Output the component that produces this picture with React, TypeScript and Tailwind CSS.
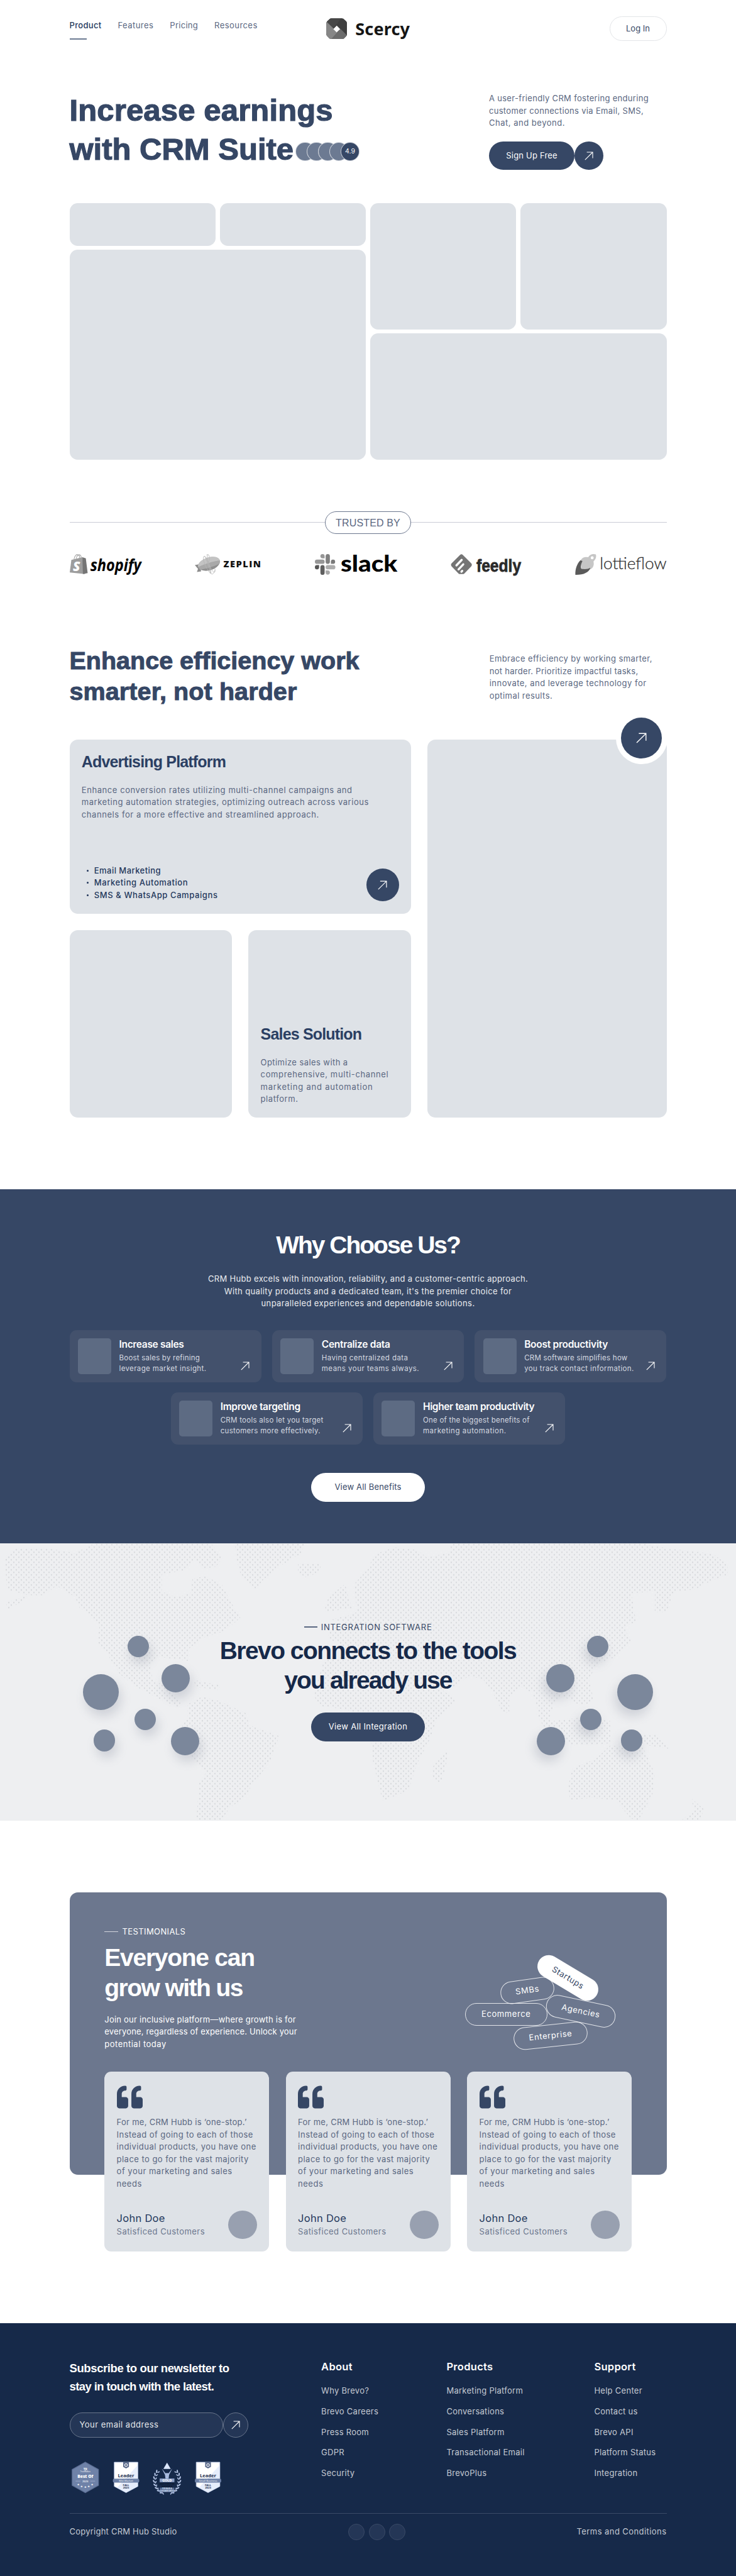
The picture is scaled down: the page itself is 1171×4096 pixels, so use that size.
import React from 'react';
import { FaQuoteLeft } from 'react-icons/fa';

type Row = [text: string, tracking: string];

function Lines({ rows, className = '' }: { rows: Row[]; className?: string }) {
  return (
    <p className={`text-[13px] leading-[19.5px] ${className}`}>
      {rows.map(([text, tracking]) => (
        <span key={text} className={`block whitespace-nowrap ${tracking}`}>
          {text}
        </span>
      ))}
    </p>
  );
}

function Arrow({ className = 'size-[14px]' }: { className?: string }) {
  return (
    <svg viewBox="0 0 14 14" className={className} fill="none" stroke="currentColor" strokeWidth="1.1">
      <path d="M0.8 13.2 13 1M3.6 1H13V10.4" />
    </svg>
  );
}

const heading = "font-['Liberation_Sans',sans-serif] font-bold";

/* ---------- Header ---------- */

function Header() {
  return (
    <header className="mx-auto grid h-[65.3px] w-[950px] grid-cols-[1fr_auto_1fr] pt-[26px]">
      <nav className="flex gap-[26px] pt-[4px] text-[13px] leading-5 text-[#5a6781]">
        <div className="text-[#24385c]">
          <a className="block font-medium tracking-[0.32px]">Product</a>
          <div className="mt-[11px] h-[2px] w-[27px] bg-[#6c7a92]" />
        </div>
        <a className="tracking-[0.45px]">Features</a>
        <a className="tracking-[0.28px]">Pricing</a>
        <a className="tracking-[0.44px]">Resources</a>
      </nav>
      <div className="flex h-[39px] items-center gap-[13px]">
        <svg viewBox="0 0 40 40" className="size-[33.5px]">
          <defs>
            <clipPath id="logo">
              <path d="M11 0H29Q33 0 36 4Q40 7 40 11V29Q40 33 36 36Q33 40 29 40H11Q7 40 4 36Q0 33 0 29V11Q0 7 4 4Q7 0 11 0Z" />
            </clipPath>
          </defs>
          <g clipPath="url(#logo)">
            <path d="M0 0H40V40H0Z" fill="#3f3f3f" />
            <path d="M0 0H28L20 12 12 20 0 7Z" fill="#474747" />
            <path d="M0 6 28 33 9 40H0Z" fill="#868686" />
            <path d="M9 40 27 20 40 33V40Z" fill="#6b6b6b" />
            <path d="M20 14 26.5 20.5 20 27 13.500 20.500Z" fill="#fff" />
          </g>
        </svg>
        <span className="font-['Noto_Sans',sans-serif] text-[27px] leading-[39px] font-bold tracking-[0.2px] text-[#151515]">
          Scercy
        </span>
      </div>
      <a className="flex h-[39.3px] w-[91px] items-center justify-center justify-self-end rounded-full border border-[#e3e5e8] pt-px text-[13px] font-normal text-[#364765]">
        Log In
      </a>
    </header>
  );
}

/* ---------- Hero ---------- */

function Hero() {
  return (
    <section className="mx-auto mt-[80px] w-[950px]">
      <div className="flex h-[177.700px] justify-between">
        <h1 className={`${heading} text-[49px] leading-[61.9px] text-[#364765]`}>
          <span className="block tracking-[0.15px] [-webkit-text-stroke:1.2px_currentColor]">Increase earnings</span>
          <span className="flex items-center whitespace-nowrap">
            <span className="[-webkit-text-stroke:1.2px_currentColor]">with CRM Suite</span>
            <span className="mt-[6px] ml-[3px] flex">
              <i className="size-[30.6px] rounded-full border border-white/70 bg-[#6c7a92]" />
              <i className="-ml-[12.700px] size-[30.6px] rounded-full border border-white/70 bg-[#6c7a92]" />
              <i className="-ml-[12.700px] size-[30.6px] rounded-full border border-white/70 bg-[#6c7a92]" />
              <i className="-ml-[12.700px] size-[30.6px] rounded-full border border-white/70 bg-[#6c7a92]" />
              <b className="-ml-[12.700px] flex size-[30.6px] items-center justify-center rounded-full border border-white/70 bg-[#364765] font-[Inter,sans-serif] text-[10.5px] leading-none font-normal text-white">
                4.9
              </b>
            </span>
          </span>
        </h1>
        <div className="w-[282.6px] pt-[2px] text-[#5a6781]">
          <Lines
            rows={[
              ['A user-friendly CRM fostering enduring', 'tracking-[0.32px]'],
              ['customer connections via Email, SMS,', 'tracking-[0.33px]'],
              ['Chat, and beyond.', 'tracking-[0.52px]'],
            ]}
          />
          <div className="mt-[19px] flex text-white">
            <a className="flex h-[45.6px] w-[136.4px] items-center justify-center rounded-full bg-[#364765] text-[13px] tracking-[0.2px]">
              Sign Up Free
            </a>
            <a className="flex size-[45.6px] items-center justify-center rounded-full bg-[#364765]">
              <Arrow />
            </a>
          </div>
        </div>
      </div>
      <div className="grid h-[408.3px] grid-cols-2 gap-[6.700px]">
        <div className="grid grid-cols-2 grid-rows-[67.8px_1fr] gap-[6.700px]">
          <div className="rounded-[12.5px] bg-[#dee2e7]" />
          <div className="rounded-[12.5px] bg-[#dee2e7]" />
          <div className="col-span-2 rounded-[12.5px] bg-[#dee2e7]" />
        </div>
        <div className="grid grid-cols-2 grid-rows-2 gap-[6.700px]">
          <div className="rounded-[12.5px] bg-[#dee2e7]" />
          <div className="rounded-[12.5px] bg-[#dee2e7]" />
          <div className="col-span-2 rounded-[12.5px] bg-[#dee2e7]" />
        </div>
      </div>
    </section>
  );
}

/* ---------- Trusted by ---------- */

function Logos() {
  return (
    <div className="mt-[31.800px] flex items-center justify-between">
      <svg viewBox="0 0 136 40" className="h-[33.5px] w-[113.8px] overflow-visible">
        <path d="M3 11 24 6 29 38 0 35Z" fill="#9d9d9d" />
        <path d="M24 6 30.500 8 34 36 25 38Z" fill="#757575" />
        <path d="M8 10C9 3 13 0 16 1.500 19 3 19 6 19 8M12 9C13 3 17 0 20 2 22 4 22 6 22 7" fill="none" stroke="#a2a2a2" strokeWidth="1.300" />
        <text x="6" y="32" fontFamily="Open Sans" fontWeight="800" fontStyle="italic" fontSize="25" fill="#fff">S</text>
        <text x="39" y="32" textLength="97" lengthAdjust="spacingAndGlyphs" fontFamily="Open Sans" fontWeight="700" fontStyle="italic" fontSize="31" fill="#000">shopify</text>
      </svg>
      <svg viewBox="0 0 126 40" className="h-[33.5px] w-[105.400px] overflow-visible">
        <path d="M0 21 9 19 12 33 4 34 6 28Z" fill="#8d8d8d" />
        <g transform="rotate(-17 27 18)">
          <ellipse cx="27" cy="18.500" rx="21.500" ry="12" fill="#a9a9a9" />
          <path d="M5.500 18.500C5.500 11 15 6.500 27 6.500S48.500 11 48.500 18.500C40 16 14 16 5.500 18.500Z" fill="#c3c3c3" />
          <path d="M9 24C18 26 36 26 45 24C38 33 16 33 9 24Z" fill="#8f8f8f" />
        </g>
        <path d="M30 37C23 30 13 10 17 5S28 20 31 37C33 40 37 36 38 31M22 2C27-2 30 6 26 16M17 5C20 0 24 18 30 37M25 1C22 6 24 14 30 26S40 36 38 27" fill="none" stroke="#b5b5b5" strokeWidth="1" />
        <text x="54.500" y="25.500" textLength="71" fontFamily="Open Sans" fontWeight="800" fontSize="17.500" fill="#111">ZEPLIN</text>
      </svg>
      <svg viewBox="0 0 157 40" className="h-[33.5px] w-[131.300px] overflow-visible">
        <g fill="#979797">
          <path d="M14.500 0a4 4 0 0 1 4 4v4h-4a4 4 0 0 1 0-8Z" />
          <rect x="0" y="10.500" width="18.500" height="8" rx="4" />
          <rect x="20.500" y="0" width="8" height="18.500" rx="4" fill="#808080" />
          <path d="M30.500 18.500v-4a4 4 0 1 1 4 4Z" fill="#7a7a7a" />
          <path d="M8 21v4a4 4 0 1 1-4-4Z" fill="#555" />
          <rect x="10.500" y="21" width="8" height="18.500" rx="4" fill="#5f5f5f" />
          <rect x="20.500" y="21" width="18.500" height="8" rx="4" fill="#adadad" />
          <path d="M20.500 31h4a4 4 0 1 1-4 4Z" fill="#a8a8a8" />
        </g>
        <text x="49" y="33.500" textLength="108" lengthAdjust="spacingAndGlyphs" fontFamily="Lato" fontWeight="900" fontSize="44" fill="#000">slack</text>
      </svg>
      <svg viewBox="0 0 134 40" className="h-[33.5px] w-[112.100px] overflow-visible">
        <path d="M18 1.500Q20.500-1 23 1.500L39.500 18Q41.500 20.500 39.500 23L26 37Q25 38 23 38H18Q16 38 15 37L1.500 23Q-.5 20.500 1.500 18Z" fill="#757575" />
        <path d="M11 21.500 21 11M15 29 24 19.500M20.500 33.500 22 32" stroke="#fff" strokeWidth="4" strokeLinecap="round" />
        <text x="49" y="33.500" textLength="85" lengthAdjust="spacingAndGlyphs" fontFamily="Liberation Sans" fontWeight="700" fontSize="34" fill="#2a2a2a" stroke="#2a2a2a" strokeWidth="0.9">feedly</text>
      </svg>
      <svg viewBox="0 0 174 40" className="h-[33.5px] w-[145.500px] overflow-visible">
        <path d="M10 12C15 5 20 5 25 6C28 0 34-1 39.500 .5C41 6 39 10 35 14C37 23 33 28 26 30L12 28Z" fill="#c6c6c6" />
        <circle cx="32.500" cy="7" r="2.800" fill="#fff" />
        <path d="M10 12 14 13C11 19 10 25 12 28C18 29 24 29 29 26C27 35 15 40 .5 39.500C0 28 4 18 10 12Z" fill="#5a5a5a" />
        <text x="47" y="28.500" textLength="127" lengthAdjust="spacingAndGlyphs" fontFamily="Lato" fontWeight="300" fontSize="31.500" fill="#2c2c2c" stroke="#2c2c2c" strokeWidth="0.3">lottieflow</text>
      </svg>
    </div>
  );
}

function Trusted() {
  return (
    <section className="mx-auto mt-[81.500px] w-[950px]">
      <div className="flex items-center">
        <div className="h-px grow bg-[#c9ccd6]" />
        <div className="flex h-[36.2px] w-[136.300px] items-center justify-center rounded-full border border-[#6c778e] pt-0.5 font-['Liberation_Sans',sans-serif] text-[16px] tracking-[0.15px] text-[#5a6781]">
          TRUSTED BY
        </div>
        <div className="h-px grow bg-[#c9ccd6]" />
      </div>
      <Logos />
    </section>
  );
}

/* ---------- Efficiency ---------- */

function Efficiency() {
  return (
    <section className="mx-auto mt-[112.100px] w-[950px]">
      <div className="flex h-[149.200px] justify-between">
        <h2 className={`${heading} text-[39.5px] leading-[49px] text-[#364765] [-webkit-text-stroke:1px_currentColor]`}>
          <span className="block">Enhance efficiency work</span>
          <span className="block tracking-[0.1px]">smarter, not harder</span>
        </h2>
        <Lines
          className="w-[281.800px] pt-3 text-[#5a6781]"
          rows={[
            ['Embrace efficiency by working smarter,', 'tracking-[0.41px]'],
            ['not harder. Prioritize impactful tasks,', 'tracking-[0.3px]'],
            ['innovate, and leverage technology for', 'tracking-[0.48px]'],
            ['optimal results.', 'tracking-[0.43px]'],
          ]}
        />
      </div>
      <div className="flex h-[601.900px] gap-[25.900px]">
        <div className="flex w-[543.600px] flex-col gap-[25.900px]">
          <article className="flex h-[277.200px] flex-col rounded-[13px] bg-[#dee2e7] px-[19.300px] pt-5 pb-[19.600px]">
            <h3 className={`${heading} text-[25px] leading-[30px] tracking-[-0.83px] text-[#2b3f63]`}>
              Advertising Platform
            </h3>
            <Lines
              className="mt-[21.300px] text-[#5a6781]"
              rows={[
                ['Enhance conversion rates utilizing multi-channel campaigns and', 'tracking-[0.57px]'],
                ['marketing automation strategies, optimizing outreach across various', 'tracking-[0.55px]'],
                ['channels for a more effective and streamlined approach.', 'tracking-[0.57px]'],
              ]}
            />
            <div className="mt-auto flex items-end justify-between">
              <ul className="text-[13px] leading-[19.5px] font-medium text-[#24385c]">
                {[
                  ['Email Marketing', 'tracking-[0.46px]'],
                  ['Marketing Automation', 'tracking-[0.59px]'],
                  ['SMS & WhatsApp Campaigns', 'tracking-[0.59px]'],
                ].map(([t, c]) => (
                  <li key={t} className={`flex items-center pl-[8px] ${c}`}>
                    <i className="mr-[8.800px] size-[3.200px] rounded-full bg-current" />
                    {t}
                  </li>
                ))}
              </ul>
              <a className="flex size-[52px] items-center justify-center rounded-full bg-[#364765] text-white">
                <Arrow className="size-[15px]" />
              </a>
            </div>
          </article>
          <div className="flex grow justify-between">
            <article className="w-[258.800px] rounded-[13px] bg-[#dee2e7]" />
            <article className="flex w-[258.800px] flex-col justify-end rounded-[13px] bg-[#dee2e7] px-[19.300px] pb-[19.800px]">
              <h3 className={`${heading} text-[25px] leading-[30px] tracking-[-0.83px] text-[#2b3f63]`}>
                Sales Solution
              </h3>
              <Lines
                className="mt-[21px] text-[#5a6781]"
                rows={[
                  ['Optimize sales with a', 'tracking-[0.42px]'],
                  ['comprehensive, multi-channel', 'tracking-[0.63px]'],
                  ['marketing and automation', 'tracking-[0.79px]'],
                  ['platform.', 'tracking-[0.56px]'],
                ]}
              />
            </article>
          </div>
        </div>
        <article className="relative grow rounded-[13px] bg-[#dee2e7]">
          <a className="absolute -top-[42.600px] -right-px flex size-[82px] items-center justify-center rounded-full bg-white">
            <span className="flex size-[65px] items-center justify-center rounded-full bg-[#364765] text-white">
              <Arrow className="size-[17px]" />
            </span>
          </a>
        </article>
      </div>
    </section>
  );
}

/* ---------- Why choose us ---------- */

const benefits: { title: Row; rows: Row[] }[] = [
  {
    title: ['Increase sales', 'tracking-[-0.33px]'],
    rows: [['Boost sales by refining', 'tracking-[0.22px]'], ['leverage market insight.', 'tracking-[0.36px]']],
  },
  {
    title: ['Centralize data', 'tracking-[-0.29px]'],
    rows: [['Having centralized data', 'tracking-[0.4px]'], ['means your teams always.', 'tracking-[0.47px]']],
  },
  {
    title: ['Boost productivity', 'tracking-[-0.26px]'],
    rows: [['CRM software simplifies how', 'tracking-[0.25px]'], ['you track contact information.', 'tracking-[0.39px]']],
  },
  {
    title: ['Improve targeting', 'tracking-[-0.32px]'],
    rows: [['CRM tools also let you target', 'tracking-[0.27px]'], ['customers more effectively.', 'tracking-[0.31px]']],
  },
  {
    title: ['Higher team productivity', 'tracking-[-0.37px]'],
    rows: [['One of the biggest benefits of', 'tracking-[0.24px]'], ['marketing automation.', 'tracking-[0.54px]']],
  },
];

function WhyUs() {
  return (
    <section className="mt-[113.900px] flex h-[562.200px] flex-col items-center bg-[#364765] pt-[63.200px] text-white">
      <h2 className={`${heading} text-[39px] leading-[50px] tracking-[-2px]`}>Why Choose Us?</h2>
      <Lines
        className="mt-[19.500px] text-center text-white/90"
        rows={[
          ['CRM Hubb excels with innovation, reliability, and a customer-centric approach.', 'tracking-[0.32px]'],
          ["With quality products and a dedicated team, it's the premier choice for", 'tracking-[0.35px]'],
          ['unparalleled experiences and dependable solutions.', 'tracking-[0.4px]'],
        ]}
      />
      <div className="mt-[32.700px] flex w-[951px] flex-wrap justify-center gap-x-[17px] gap-y-[16.400px]">
        {benefits.map(({ title, rows }) => (
          <article key={title[0]} className="flex h-[82.700px] w-[305.300px] rounded-[11px] bg-[#43516c] pt-[12.800px] pr-[18.400px] pl-[13.400px]">
            <div className="mr-[12.600px] h-[57px] w-[53px] shrink-0 rounded-[5px] bg-[#5d6b83]" />
            <div>
              <h3 className={`text-[15.500px] leading-5 font-semibold whitespace-nowrap ${title[1]}`}>{title[0]}</h3>
              <p className="mt-[2.500px] text-[11.5px] leading-[17.100px] text-[#d5d9e0]">
                {rows.map(([t, c]) => (
                  <span key={t} className={`block whitespace-nowrap ${c}`}>
                    {t}
                  </span>
                ))}
              </p>
            </div>
            <Arrow className="mt-[36.500px] ml-auto size-[14px] shrink-0" />
          </article>
        ))}
      </div>
      <a className="mt-[45px] flex h-[46.200px] w-[180.700px] items-center justify-center rounded-full bg-white text-[13px] tracking-[0.19px] text-[#364765]">
        View All Benefits
      </a>
    </section>
  );
}

/* ---------- Integration ---------- */

const land = [
  '10,110 30,60 100,60 160,85 200,35 450,35 475,110 460,160 430,170 415,120 390,180 345,200 345,290 375,320 405,300 410,220 440,210 475,260 490,340 512,430 480,500 430,540 400,600 400,660 375,650 340,640 320,680 325,760 350,790 385,880 380,910 330,850 285,790 255,730 225,610 208,560 212,470 195,420 170,380 160,320 120,260 95,310 60,310 15,280',
  '12,350 60,310 50,340 18,385',
  '500,35 650,35 640,90 600,150 560,230 545,280 515,220 505,130',
  '635,140 685,145 680,180 655,220 635,190',
  '410,760 470,790 465,815 420,800',
  '400,890 430,850 470,875 525,940 530,1000 595,1060 575,1200 540,1310 520,1390 490,1440 470,1512 418,1512 425,1300 440,1250 415,1190 390,1100 385,1020 400,960',
  '690,400 700,320 735,250 745,340 750,380',
  '700,540 700,500 740,450 700,440 740,420 760,400 755,250 780,180 800,90 840,55 890,70 910,110 960,80 960,35 1370,35 1420,60 1520,90 1550,150 1550,200 1510,240 1480,280 1435,290 1420,400 1395,400 1395,290 1345,300 1355,450 1330,480 1345,560 1310,640 1270,680 1255,760 1265,870 1240,900 1200,850 1180,880 1170,980 1150,960 1135,830 1110,800 1085,850 1085,940 1070,930 1050,830 1030,760 1000,740 965,800 930,700 850,660 760,620',
  '690,660 760,620 850,660 930,700 945,820 975,870 930,980 915,1080 890,1200 870,1350 815,1405 795,1200 790,1080 775,980 740,920 680,900 668,840',
  '920,1230 955,1120 950,1220 940,1310 920,1290',
  '1140,940 1180,980 1240,960 1300,980 1300,1100 1220,1110 1170,1050',
  '1330,1060 1400,1050 1430,1130 1380,1110',
  '1215,1400 1210,1330 1220,1230 1270,1180 1300,1110 1340,1120 1370,1120 1395,1260 1390,1370 1360,1512 1345,1500 1310,1400 1260,1390',
  '1470,1385 1500,1450 1490,1512 1450,1512 1480,1450',
];

function WorldMap() {
  return (
    <svg viewBox="0 0 1171 441" className="absolute inset-0 size-full">
      <defs>
        <pattern id="dots" width="8" height="8" patternUnits="userSpaceOnUse">
          <circle cx="2" cy="2" r="1.150" fill="#d6d8dc" />
          <circle cx="6" cy="6" r="1.150" fill="#d6d8dc" />
        </pattern>
        <clipPath id="land">
          {land.map((p) => (
            <polygon key={p} points={p} transform="translate(0 -10.450) scale(.7468 .2987)" />
          ))}
        </clipPath>
      </defs>
      <rect width="1171" height="441" fill="url(#dots)" clipPath="url(#land)" />
    </svg>
  );
}

function Nodes({ className }: { className: string }) {
  const dot = 'absolute rounded-full bg-[#7b879b] shadow-[4px_10px_16px_rgba(100,110,130,0.22)]';
  return (
    <div className={`absolute inset-y-0 w-[440px] ${className}`}>
      <i className={`${dot} top-[147.500px] left-[203px] size-[34.300px]`} />
      <i className={`${dot} top-[192.700px] left-[257.200px] size-[45px]`} />
      <i className={`${dot} top-[208px] left-[131.700px] size-[57px]`} />
      <i className={`${dot} top-[263px] left-[214px] size-[34.300px]`} />
      <i className={`${dot} top-[292px] left-[271.800px] size-[45px]`} />
      <i className={`${dot} top-[296.700px] left-[148.600px] size-[34.300px]`} />
    </div>
  );
}

function Integration() {
  return (
    <section className="relative h-[441.500px] overflow-hidden bg-[#eeeff1]">
      <WorldMap />
      <Nodes className="left-0" />
      <Nodes className="right-0 -scale-x-100" />
      <div className="relative flex flex-col items-center pt-[123.500px]">
        <div className="flex items-center gap-[5.500px] text-[13px] leading-5 tracking-[0.72px] whitespace-nowrap text-[#364765]">
          <i className="h-[1.500px] w-[21.700px] bg-[#5a6781]" />
          INTEGRATION SOFTWARE
        </div>
        <h2 className={`${heading} mt-[3.800px] text-center text-[39px] leading-[47.500px] text-[#162949]`}>
          <span className="block tracking-[-1.56px]">Brevo connects to the tools</span>
          <span className="block tracking-[-1.9px]">you already use</span>
        </h2>
        <a className="mt-[27.600px] flex h-[45.200px] w-[180.700px] items-center justify-center rounded-full bg-[#364765] text-[13px] tracking-[0.34px] text-white">
          View All Integration
        </a>
      </div>
    </section>
  );
}

/* ---------- Testimonials ---------- */

const pill = 'absolute flex h-[36px] items-center justify-center rounded-full text-[13px] tracking-[0.6px]';

function Testimonials() {
  return (
    <section className="relative mx-auto mt-[114.400px] h-[448.100px] w-[950px] rounded-[13px] bg-[#6c778e] px-[55.800px] pt-[52px] text-white">
      <div className="flex items-center gap-[6.500px] text-[13px] leading-5 tracking-[0.4px]">
        <i className="h-[1.500px] w-[21.700px] bg-white/70" />
        TESTIMONIALS
      </div>
      <h2 className={`${heading} mt-[7.600px] text-[39px] leading-[48px]`}>
        <span className="block tracking-[-1.27px]">Everyone can</span>
        <span className="block tracking-[-1.56px]">grow with us</span>
      </h2>
      <Lines
        className="mt-[16.800px]"
        rows={[
          ['Join our inclusive platform—where growth is for', 'tracking-[0.22px]'],
          ['everyone, regardless of experience. Unlock your', 'tracking-[0.16px]'],
          ['potential today', 'tracking-[0.5px]'],
        ]}
      />
      <span className={`${pill} top-[175.800px] left-[629px] w-[131.500px] border border-white/80`}>Ecommerce</span>
      <span className={`${pill} top-[137.600px] left-[685px] w-[86px] -rotate-8 border border-white/80`}>SMBs</span>
      <span className={`${pill} top-[170.600px] left-[757px] w-[112px] rotate-12 border border-white/80`}>Agencies</span>
      <span className={`${pill} top-[209.800px] left-[706.700px] w-[118px] -rotate-6 border border-white/80`}>Enterprise</span>
      <span className={`${pill} top-[117.200px] left-[739.700px] w-[107px] rotate-31 bg-white text-[#364765]`}>Startups</span>
      <div className="mt-[33.800px] flex gap-[26.500px]">
        {[0, 1, 2].map((n) => (
          <article key={n} className="flex h-[285.800px] w-[262px] shrink-0 flex-col rounded-[11px] bg-[#dee2e7] px-[19.300px] pt-[19.600px] pb-[19.700px]">
            <FaQuoteLeft className="size-[41px] shrink-0 text-[#364765]" />
            <Lines
              className="mt-[10.500px] text-[#5a6781]"
              rows={[
                ['For me, CRM Hubb is ‘one-stop.’', 'tracking-[0.27px]'],
                ['Instead of going to each of those', 'tracking-[0.43px]'],
                ['individual products, you have one', 'tracking-[0.48px]'],
                ['place to go for the vast majority', 'tracking-[0.46px]'],
                ['of your marketing and sales', 'tracking-[0.5px]'],
                ['needs', 'tracking-[0.5px]'],
              ]}
            />
            <div className="mt-auto flex items-center justify-between">
              <div>
                <div className="text-[16.500px] leading-[23px] tracking-[0.27px] text-[#24385c]">John Doe</div>
                <div className="text-[13px] leading-[19px] tracking-[0.46px] text-[#6c778e]">Satisficed Customers</div>
              </div>
              <i className="size-[45.600px] rounded-full bg-[#98a0b0]" />
            </div>
          </article>
        ))}
      </div>
    </section>
  );
}

/* ---------- Footer ---------- */

function LeaderBadge({ x, label }: { x: number; label: string }) {
  return (
    <g transform={`translate(${x} 0)`} textAnchor="middle" fontFamily="Open Sans" fontWeight="700" fill="#1b2c4b">
      <path d="M2.500 0H47.500V46L25 58 2.500 46Z" fill="#fff" stroke="#b9c9ea" strokeWidth="1" />
      <path d="M47 6V46L25 57.500 8 48.500Z" fill="#e6edfb" />
      <path d="M19.500 0H30.500V9L25 12 19.500 9Z" fill="#5b6b8c" />
      <circle cx="25" cy="5.500" r="2.600" fill="none" stroke="#fff" strokeWidth="1.200" />
      <text x="25" y="29" fontSize="9" textLength="31" lengthAdjust="spacingAndGlyphs">Leader</text>
      <rect x="0" y="31.500" width="50" height="7.500" rx="2.500" fill="#6f82a8" />
      <text x="25" y="37.300" fontSize="5" fontWeight="400" fill="#fff">{label}</text>
      <text x="25" y="45" fontSize="5">FALL</text>
      <text x="25" y="50.500" fontSize="5">2023</text>
    </g>
  );
}

function Badges() {
  return (
    <svg viewBox="0 0 294 58" className="mt-[39.100px] h-[48.500px] w-[246px] overflow-visible">
      <path d="M29.500 0 54.500 14V44L29.500 58 4.500 44V14Z" fill="#6f82a8" stroke="#5d6f95" strokeWidth="1.500" />
      <g textAnchor="middle" fill="#fff" fontFamily="Open Sans">
        <text x="29.500" y="15.500" fontSize="6" fontWeight="700">TR</text>
        <text x="29.500" y="19.500" fontSize="3.500">TrustRadius</text>
        <text x="29.500" y="30" fontSize="8" fontWeight="800">Best Of</text>
        <text x="29.500" y="38" fontSize="5" fontWeight="600">2023</text>
      </g>
      <path d="M11 36h9M39 36h9" stroke="#c9d5ee" strokeWidth=".6" />
      <g fill="#fff" fontSize="5.500" textAnchor="middle" fontFamily="DejaVu Sans">
        <text x="16" y="44.500">★</text>
        <text x="22.500" y="47.500">★</text>
        <text x="29.500" y="49.500">★</text>
        <text x="36" y="47.500">★</text>
        <text x="42.500" y="44.500">★</text>
      </g>
      <LeaderBadge x={82} label="Mid-Market" />
      <g fill="#b9c9ea">
        {[0, 1, 2, 3, 4, 5, 6, 7].map((i) => {
          const tilt = -38 + i * 14.5;
          const a = tilt * (Math.PI / 180);
          const y = 34 + Math.sin(a) * 27;
          const dx = Math.cos(a) * 25;
          return (
            <g key={i}>
              <ellipse cx={185 - dx} cy={y} rx="1.300" ry="3.200" transform={`rotate(${-tilt - 30} ${185 - dx} ${y})`} />
              <ellipse cx={185 + dx} cy={y} rx="1.300" ry="3.200" transform={`rotate(${tilt + 30} ${185 + dx} ${y})`} />
              <ellipse cx={188.5 - dx} cy={y + 1.5} rx="1" ry="2.600" transform={`rotate(${-tilt + 30} ${188.5 - dx} ${y + 1.5})`} />
              <ellipse cx={181.5 + dx} cy={y + 1.5} rx="1" ry="2.600" transform={`rotate(${tilt - 30} ${181.5 + dx} ${y + 1.5})`} />
            </g>
          );
        })}
        <path d="M185 1 192 13H178Z" fill="#dbe6fb" />
        <circle cx="185" cy="23" r="2.200" />
        <path d="M175 12 181 24 182 31H188L189 24 195 12 188 21H182Z" fill="#a9bbdf" />
      </g>
      <rect x="171" y="31" width="28" height="7" fill="#8fa2c8" />
      <g textAnchor="middle" fontWeight="700" fill="#0b1529">
        <text x="185" y="37" fontSize="6.500" fill="#fff" fontFamily="Open Sans" textLength="18">GOLD</text>
        <text x="185" y="43" fontSize="5" fontFamily="Liberation Serif">2023 STEVIE</text>
        <text x="185" y="47.800" fontSize="5" fontFamily="Liberation Serif">WINNER</text>
      </g>
      <path d="M171 48.500H199V57H171Z" fill="#5d6f95" />
      <g textAnchor="middle" fill="#dbe6fb" fontFamily="Open Sans" fontWeight="700" fontSize="3">
        <text x="185" y="52">FOR SALES &amp;</text>
        <text x="185" y="55.800">CUSTOMER SERVICE</text>
      </g>
      <LeaderBadge x={238} label="Small Business" />
    </svg>
  );
}

const columns = [
  { title: 'About', links: ['Why Brevo?', 'Brevo Careers', 'Press Room', 'GDPR', 'Security'] },
  { title: 'Products', links: ['Marketing Platform', 'Conversations', 'Sales Platform', 'Transactional Email', 'BrevoPlus'] },
  { title: 'Support', links: ['Help Center', 'Contact us', 'Brevo API', 'Platform Status', 'Integration'] },
];

function Footer() {
  return (
    <footer className="mt-[236.800px] h-[403.400px] bg-[#162949] pt-[56.700px] text-[13px] text-[#c5cad3]">
      <div className="mx-auto w-[950px]">
        <div className="grid h-[245.800px] grid-cols-[400.600px_199.300px_235px_auto] border-b border-[#3a4a66]">
          <div>
            <h3 className={`${heading} text-[18.500px] leading-[29.400px] whitespace-nowrap text-white`}>
              <span className="block tracking-[-0.4px]">Subscribe to our newsletter to</span>
              <span className="block tracking-[-0.6px]">stay in touch with the latest.</span>
            </h3>
            <div className="mt-[25.800px] flex">
              <div className="flex h-[40.700px] w-[244px] items-center rounded-full border border-[#68758b] bg-[#243656] pl-[15px] tracking-[0.48px] text-[#e3e6ea]">
                Your email address
              </div>
              <a className="flex size-[40.700px] items-center justify-center rounded-full border border-[#68758b] bg-[#243656] text-white">
                <Arrow />
              </a>
            </div>
            <Badges />
          </div>
          {columns.map(({ title, links }) => (
            <div key={title}>
              <h4 className="text-[16.500px] leading-6 font-semibold tracking-[0.3px] text-white">{title}</h4>
              <ul className="mt-[10.400px] leading-[32.600px] tracking-[0.28px]">
                {links.map((l) => (
                  <li key={l} className="whitespace-nowrap">
                    {l}
                  </li>
                ))}
              </ul>
            </div>
          ))}
        </div>
        <div className="mt-4 flex items-center justify-between">
          <span className="tracking-[0.23px]">Copyright CRM Hub Studio</span>
          <div className="flex gap-[6.500px]">
            <i className="size-[26px] rounded-full border border-[#3a4a66] bg-[#243656]" />
            <i className="size-[26px] rounded-full border border-[#3a4a66] bg-[#243656]" />
            <i className="size-[26px] rounded-full border border-[#3a4a66] bg-[#243656]" />
          </div>
          <span className="tracking-[0.43px]">Terms and Conditions</span>
        </div>
      </div>
    </footer>
  );
}

export default function App() {
  return (
    <div className="h-[4096px] w-[1171px] overflow-hidden bg-white font-[Inter,sans-serif]">
      <Header />
      <Hero />
      <Trusted />
      <Efficiency />
      <WhyUs />
      <Integration />
      <Testimonials />
      <Footer />
    </div>
  );
}
